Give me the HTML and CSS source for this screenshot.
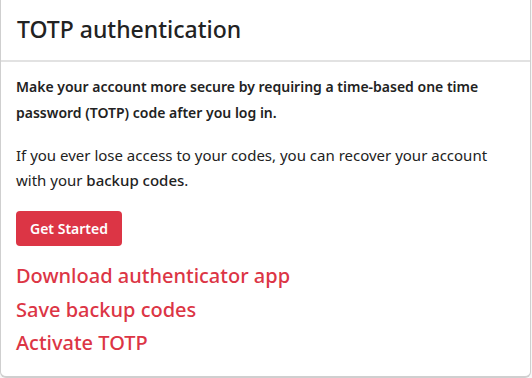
FILE: index.html
```html
<!DOCTYPE html>
<html lang="en">
<head>
    <meta charset="UTF-8">
    <meta name="viewport" content="width=device-width, initial-scale=1.0">
    <title>TOTP authentication</title>
    <link rel="stylesheet" href="styles.css">
</head>
<body>
    <div class="card">
        <div class="card-header">
            <h2>TOTP authentication</h2>
        </div>
        <div class="card-body">
            <p class="lead">Make your account more secure by requiring a time-based one time password (TOTP) code after you log in.</p>
            <p class="note">If you ever lose access to your codes, you can recover your account with your <b>backup codes</b>.</p>
            <button class="btn" type="button">Get Started</button>
            <ul class="steps">
                <li><a href="#">Download authenticator app</a></li>
                <li><a href="#">Save backup codes</a></li>
                <li><a href="#">Activate TOTP</a></li>
            </ul>
        </div>
    </div>
</body>
</html>
```

FILE: styles.css
```css
* {
    padding: 0;
    margin: 0;
    box-sizing: border-box;
}

body {
    font-family: "Noto Sans", Arial, sans-serif;
    background-color: #f7f7f7;
    color: #222;
}

.card {
    width: 531px;
    height: 378px;
    background-color: #fff;
    border: 1px solid #cfcfcf;
    border-top: none;
    border-bottom-width: 2px;
    border-radius: 0 0 6px 6px;
}

.card-header {
    height: 62px;
    padding: 14px 16px 0;
    border-bottom: 2px solid #e2e2e2;
}

.card-header h2 {
    font-size: 23px;
    font-weight: 500;
    line-height: 30px;
    color: #222;
}

.card-body {
    padding: 12px 15px 0;
}

.card-body p {
    font-size: 15px;
    line-height: 25px;
}

.card-body p.lead {
    font-size: 14px;
    font-weight: 600;
    line-height: 26px;
    margin-bottom: 17px;
}

.card-body p.note {
    margin-bottom: 18px;
}

.note b {
    font-weight: 500;
}

.btn {
    display: block;
    width: 106px;
    height: 35px;
    border: none;
    border-radius: 4px;
    background-color: #dc3545;
    color: #fff;
    font-family: inherit;
    font-size: 14px;
    font-weight: 600;
}

.steps {
    list-style: none;
    margin-top: 13px;
}

.steps li {
    font-size: 20px;
    line-height: 33.5px;
}

.steps a {
    font-weight: 500;
    color: #dc3545;
    text-decoration: none;
}
```
